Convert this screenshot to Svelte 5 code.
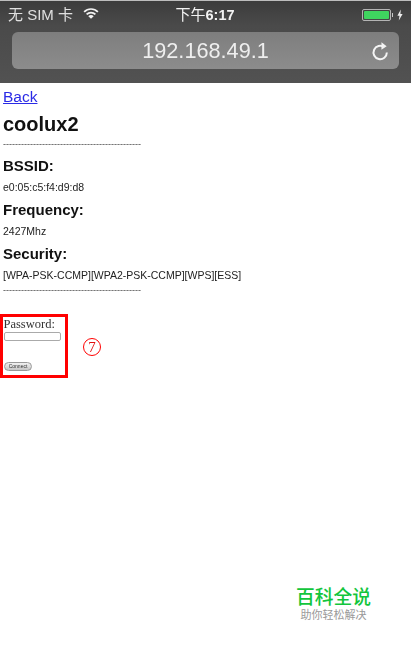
<script>
  const dashes = '-'.repeat(46);
</script>

<div class="page">
  <header class="chrome">
    <div class="status">
      <div class="left">
        <span class="txt">无 SIM 卡</span>
        <svg class="wifi" width="16" height="11" viewBox="0 0 17 12" aria-hidden="true">
          <path d="M1 4.2a10.6 10.6 0 0 1 15 0" fill="none" stroke="#f2f2f2" stroke-width="1.9"/>
          <path d="M3.7 6.9a6.8 6.8 0 0 1 9.6 0" fill="none" stroke="#f2f2f2" stroke-width="1.9"/>
          <path d="M8.5 11.6 5.6 8.9a4 4 0 0 1 5.8 0z" fill="#f2f2f2"/>
        </svg>
      </div>
      <div class="time txt"><span class="ampm">下午</span><b>6:17</b></div>
      <div class="right">
        <div class="battery"><div class="level"></div></div>
        <div class="nub"></div>
        <svg width="6" height="12" viewBox="0 0 6 11" aria-hidden="true">
          <path d="M3.8 0 .4 6.2h2.1L1.8 11l3.8-6.5H3.4z" fill="#eee"/>
        </svg>
      </div>
    </div>
    <div class="url">
      <span class="addr">192.168.49.1</span>
      <svg class="reload" width="18" height="20" viewBox="0 0 20 21" aria-hidden="true">
        <path d="M14.6 6.2a7.4 7.4 0 1 0 3 6" fill="none" stroke="#f4f4f4" stroke-width="2.2"/>
        <path d="M11.6 0.8 17.4 5.2 11.6 9z" fill="#f4f4f4"/>
      </svg>
    </div>
  </header>

  <main class="content">
    <a class="back" href="#back">Back</a>
    <h1>coolux2</h1>
    <div class="dash">{dashes}</div>
    <h2>BSSID:</h2>
    <p>e0:05:c5:f4:d9:d8</p>
    <h2>Frequency:</h2>
    <p>2427Mhz</p>
    <h2>Security:</h2>
    <p>[WPA-PSK-CCMP][WPA2-PSK-CCMP][WPS][ESS]</p>
    <div class="dash">{dashes}</div>

    <div class="form-row">
      <div class="redbox">
        <div class="label">Password:</div>
        <div class="field"></div>
        <div class="connect">Connect</div>
      </div>
      <div class="step"><span>7</span></div>
    </div>
  </main>

  <div class="mark">
    <div class="mark-title">百科全说</div>
    <div class="mark-sub">助你轻松解决</div>
  </div>
</div>

<style>
  :global(body) {
    margin: 0;
    background: #fff;
  }
  .page {
    position: relative;
    width: 411px;
    height: 651px;
    overflow: hidden;
    background: #fff;
    font-family: "Liberation Sans", Arial, sans-serif;
  }
  .chrome {
    height: 83px;
    box-sizing: border-box;
    border-top: 1px solid #bdbdbd;
    background: linear-gradient(#3c3c3c, #4a4a4a 30%, #525252);
    color: #f0f0f0;
    filter: blur(0.35px);
  }
  .status {
    display: grid;
    grid-template-columns: 1fr auto 1fr;
    align-items: center;
    height: 27px;
    padding: 0 8px;
    font-size: 15px;
    font-family: "Liberation Sans", "Noto Sans CJK SC", sans-serif;
  }
  .txt {
    margin-bottom: 3px;
  }
  .left {
    display: flex;
    align-items: center;
    gap: 10px;
    color: #e0e0e0;
  }
  .wifi {
    margin-bottom: 2px;
  }
  .time {
    color: #f2f2f2;
    font-size: 15px;
    margin-left: -1px;
  }
  .time b {
    font-size: 14.5px;
  }
  .right {
    display: flex;
    justify-content: flex-end;
    align-items: center;
  }
  .battery {
    width: 29px;
    height: 12px;
    box-sizing: border-box;
    border: 1px solid #b4b4b4;
    border-radius: 2px;
    padding: 1px;
    display: flex;
  }
  .level {
    flex: 1;
    background: #3fd45f;
    border-radius: 1px;
  }
  .nub {
    width: 1px;
    height: 4px;
    background: #c8c8c8;
    margin: 0 4px 0 1px;
  }
  .url {
    position: relative;
    margin: 4px 12px 0;
    height: 37px;
    border-radius: 6px;
    background: linear-gradient(#7e7e7e, #8c8c8c);
    display: flex;
    align-items: center;
    justify-content: center;
  }
  .addr {
    font-size: 21.7px;
    color: #eeeeee;
  }
  .reload {
    position: absolute;
    right: 10px;
    top: 9px;
  }
  .content {
    padding: 5px 3px 0 3px;
    color: #1a1a1a;
    filter: blur(0.35px);
  }
  .back {
    display: block;
    font-size: 15.5px;
    line-height: 18px;
    color: #2a2ae6;
  }
  h1 {
    font-size: 20px;
    line-height: 24px;
    margin: 6px 0 -1px;
    color: #111;
  }
  .dash {
    font-size: 9.03px;
    line-height: 10px;
    margin-top: 4px;
    color: #444;
    white-space: nowrap;
    overflow: hidden;
  }
  h2 {
    font-size: 15px;
    line-height: 18px;
    margin: 8px 0 0;
    color: #111;
  }
  p {
    font-size: 10.5px;
    line-height: 12px;
    margin: 6px 0 0;
    color: #222;
  }
  .form-row {
    display: flex;
    align-items: center;
    margin: 19px 0 0 -3px;
  }
  .redbox {
    width: 68px;
    height: 64px;
    box-sizing: border-box;
    border: 3px solid #f00;
    padding: 0 0 0 1px;
    font-family: "Liberation Serif", serif;
  }
  .label {
    font-size: 12.5px;
    line-height: 14px;
    color: #333;
    margin-left: -0.5px;
  }
  .field {
    width: 55px;
    height: 7px;
    border: 1px solid #aaa;
    border-radius: 2px;
    background: #fff;
    margin-top: 1px;
  }
  .connect {
    width: 26px;
    height: 7px;
    margin-top: 21px;
    border: 1px solid #999;
    border-radius: 5px;
    background: linear-gradient(#f2f2f2, #c6c6c6);
    font: 5px/7px "Liberation Sans", sans-serif;
    text-align: center;
    color: #333;
  }
  .step {
    width: 18px;
    height: 18px;
    box-sizing: border-box;
    margin-left: 15px;
    margin-top: 2px;
    border: 1px solid #f00;
    border-radius: 50%;
    display: flex;
    align-items: center;
    justify-content: center;
    font: 15px/1 "Liberation Serif", serif;
    color: #e01010;
  }
  .mark {
    position: absolute;
    left: 286px;
    top: 585px;
    width: 95px;
    text-align: center;
    font-family: "Noto Sans CJK SC", sans-serif;
  }
  .mark-title {
    font-size: 18.75px;
    line-height: 22px;
    font-weight: 500;
    color: #12c53c;
    white-space: nowrap;
  }
  .mark-sub {
    font-size: 11px;
    line-height: 13px;
    margin-top: 1px;
    color: #999;
    white-space: nowrap;
  }
</style>
